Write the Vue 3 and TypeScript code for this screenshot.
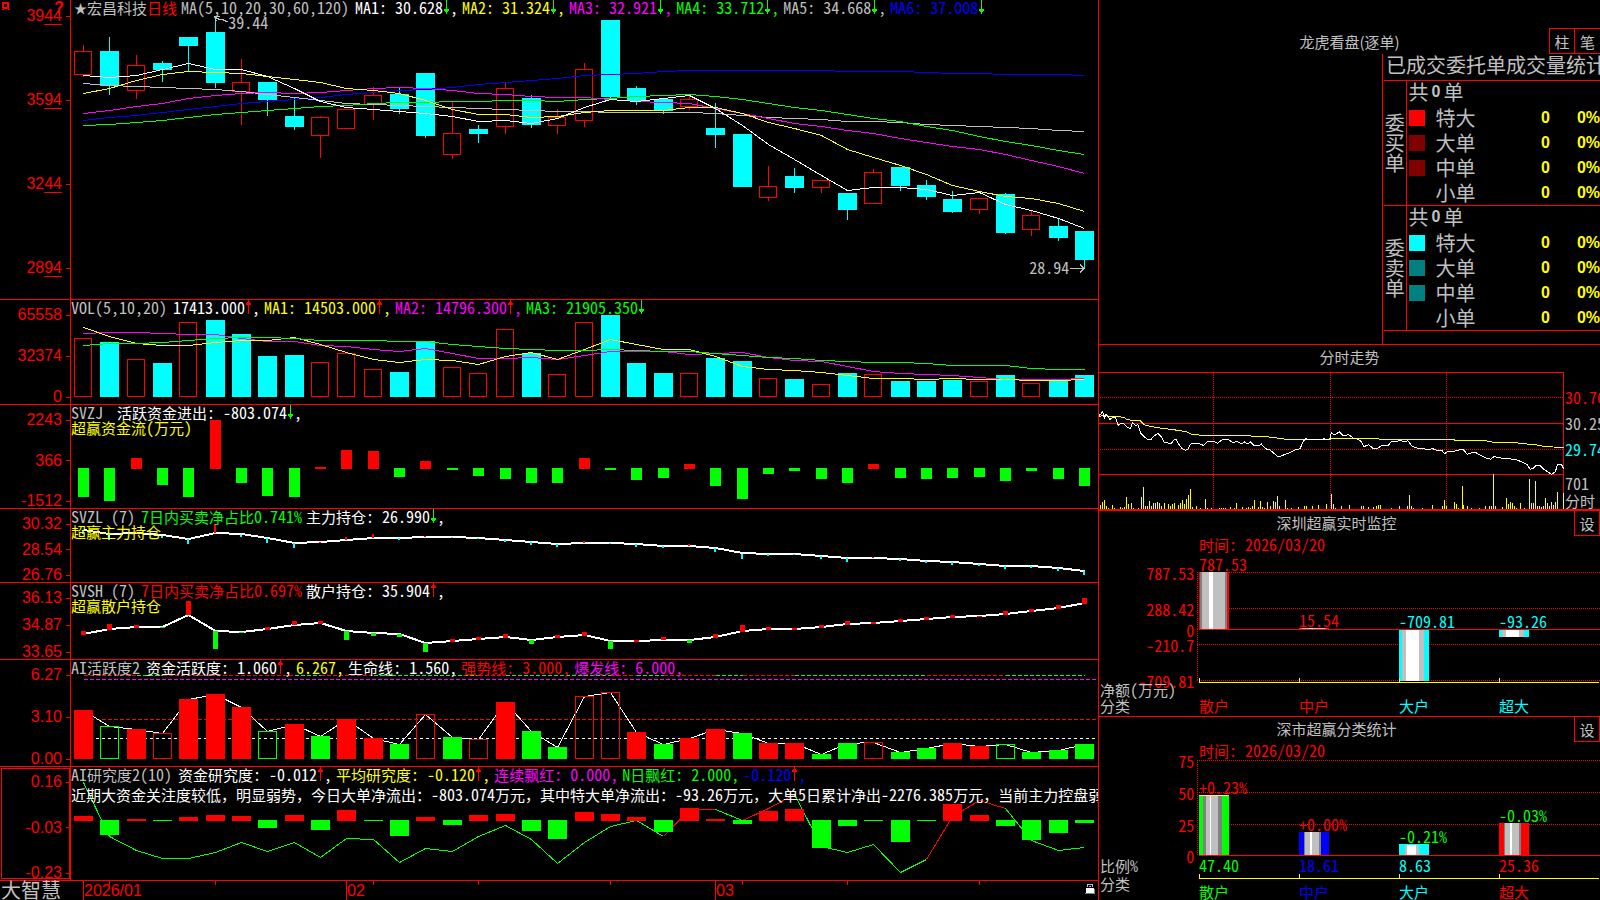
<script setup lang="ts">
import { h, type FunctionalComponent } from 'vue'

interface Rect { k: 'rect'; x: number; y: number; w: number; h: number; fill: string; stroke: string }
interface Poly { k: 'poly'; pts: string; stroke: string; w: number; dash?: string }
type Shape = Rect | Poly
interface LegendItem { t: string; c: string; a?: 'up' | 'down'; comma?: boolean }
interface Pane {
  id: string
  title: string
  items: LegendItem[]
  note?: string
  noteColor?: string
  ticks: string[]
  grow: number
  y0: number
  shapes: Shape[]
}

const RED = '#ff0000'
const CYAN = '#00ffff'
const GREEN = '#00ff00'
const YELLOW = '#ffff00'
const MAGENTA = '#ff00ff'
const BLUE = '#0000ff'
const GREY = '#c0c0c0'
const DIM = '#808080'
const WHITE = '#ffffff'
const NONE = 'none'

/* Han characters and half-width characters use two different faces. */
const Txt: FunctionalComponent<{ v: string }> = (props) =>
  h(
    'span',
    { class: 'txt' },
    (props.v.match(/[\u0000-\u00ff]+|[^\u0000-\u00ff]+/g) ?? []).map((run) =>
      h('span', { class: run.charCodeAt(0) < 256 ? 'txt-lat' : 'txt-han' }, run),
    ),
  )
Txt.props = ['v']

/* Bar i of the 39 trading days: centre of its column. */
const cx = (i: number) => 12.5 + Math.round(i * 26.345)

const solid = (x: number, top: number, bottom: number, w: number, fill: string): Rect => ({
  k: 'rect', x, y: Math.round(top), w, h: Math.max(1, Math.round(bottom) - Math.round(top)), fill, stroke: NONE,
})
const hollow = (x: number, top: number, bottom: number, w: number, stroke: string): Rect => ({
  k: 'rect', x: x + 0.5, y: Math.round(top) + 0.5, w: w - 1, h: Math.max(1, Math.round(bottom) - Math.round(top) - 1), fill: NONE, stroke,
})
const poly = (pts: number[][], stroke: string, w = 1, dash?: string): Poly => ({
  k: 'poly', pts: pts.map((p) => p.join(',')).join(' '), stroke, w, dash,
})
const series = (ys: number[], stroke: string, w = 1, scale = 1): Poly =>
  poly(ys.map((y, i) => [cx(i), Math.floor(y / scale) + (w === 1 ? 0.5 : 0)]), stroke, w)

/* high, body top, body bottom, low; r = rising day */
const candles: [string, number, number, number, number][] = [
  ['r', 45, 51, 75, 77], ['f', 37, 51, 86, 95], ['r', 55, 65, 91, 99], ['f', 61, 63, 70, 82], ['f', 37, 37, 46, 71],
  ['f', 17, 32, 83, 88], ['r', 59, 82, 92, 125], ['f', 82, 82, 100, 116], ['f', 98, 116, 127, 130], ['r', 116, 117, 136, 158],
  ['r', 109, 109, 129, 129], ['r', 87, 95, 105, 120], ['f', 88, 94, 109, 114], ['f', 73, 73, 136, 138], ['r', 102, 133, 155, 159],
  ['f', 125, 129, 134, 143], ['r', 83, 88, 127, 134], ['f', 95, 98, 125, 128], ['r', 109, 117, 126, 134], ['r', 63, 69, 121, 127],
  ['f', 20, 20, 97, 99], ['f', 86, 88, 101, 105], ['f', 98, 99, 111, 114], ['r', 96, 99, 107, 110], ['f', 103, 128, 135, 148],
  ['f', 134, 134, 187, 187], ['r', 166, 186, 198, 201], ['f', 168, 176, 188, 193], ['r', 180, 180, 188, 193], ['f', 193, 193, 210, 220],
  ['r', 169, 172, 204, 204], ['f', 167, 167, 186, 191], ['f', 180, 185, 197, 200], ['f', 191, 199, 212, 213], ['r', 198, 198, 210, 214],
  ['f', 193, 194, 233, 234], ['r', 210, 215, 230, 236], ['f', 218, 226, 238, 241], ['f', 231, 231, 260, 268],
]
const priceShapes: Shape[] = candles.flatMap(([t, hi, top, bot, lo], i): Shape[] => {
  const x = cx(i)
  const c = t === 'r' ? RED : CYAN
  const wicks: Shape[] = []
  if (hi < top) wicks.push(poly([[x, hi], [x, top]], c))
  if (lo > bot) wicks.push(poly([[x, bot], [x, lo]], c))
  return [...wicks, t === 'r' ? hollow(x - 9.5, top, bot, 18, c) : solid(x - 9.5, top, bot, 19, c)]
})
priceShapes.push(
  series([120, 117, 115, 112, 109, 106, 103, 101, 99, 97, 94, 92, 90, 89, 87, 84, 82, 80, 78, 75, 74, 73, 71, 70, 70, 70, 70, 70, 70, 71, 71, 71, 72, 73, 73, 74, 74, 74, 75], BLUE),
  series([83, 85, 86, 87, 88, 89, 91, 94, 97, 100, 103, 104, 105, 106, 107, 108, 109, 110, 111, 111, 112, 112, 112, 112, 113, 115, 117, 118, 119, 121, 121, 122, 124, 125, 126, 127, 128, 130, 131], GREY),
  series([125, 124, 122, 120, 117, 114, 112, 110, 108, 106, 105, 103, 102, 102, 101, 101, 100, 100, 101, 99, 98, 96, 95, 94, 96, 99, 103, 107, 110, 114, 118, 121, 126, 130, 136, 141, 145, 150, 154], GREEN),
  series([113, 110, 106, 103, 98, 95, 93, 92, 93, 92, 90, 88, 87, 88, 90, 93, 94, 96, 97, 97, 99, 101, 102, 103, 108, 113, 118, 123, 126, 130, 133, 138, 142, 146, 149, 154, 160, 166, 173], MAGENTA),
  series([93, 88, 80, 74, 71, 72, 73, 76, 79, 82, 88, 90, 93, 100, 109, 114, 114, 117, 116, 112, 110, 110, 110, 107, 107, 113, 122, 128, 135, 149, 157, 165, 174, 185, 191, 196, 198, 203, 211], YELLOW),
  series([75, 77, 75, 69, 63, 69, 69, 76, 88, 101, 107, 109, 111, 113, 116, 121, 120, 123, 118, 107, 99, 101, 98, 95, 108, 125, 144, 159, 175, 190, 187, 187, 189, 195, 192, 204, 210, 218, 228], WHITE),
)

/* The lower panes hold their levels in thirds of a unit. */
const volTops = [145, 156, 208, 219, 97, 90, 132, 198, 195, 217, 190, 238, 246, 153, 232, 250, 118, 190, 253, 97, 75, 219, 249, 250, 204, 213, 265, 267, 283, 249, 253, 273, 273, 270, 274, 255, 280, 270, 255]
const volKinds = 'rfrfrffffrrrffrrrfrrfffrffrfrfrfffrfrff'
const volShapes: Shape[] = volTops.map((v, i) =>
  volKinds[i] === 'r' ? hollow(cx(i) - 9.5, v / 3, 107, 18, RED) : solid(cx(i) - 9.5, v / 3, 107, 19, CYAN),
)
volShapes.push(
  series([130, 127, 127, 130, 133, 134, 145, 154, 155, 165, 170, 179, 184, 176, 190, 205, 206, 202, 208, 196, 185, 184, 184, 192, 190, 186, 201, 210, 215, 229, 245, 250, 253, 256, 262, 268, 268, 268, 265], MAGENTA, 1, 3),
  series([112, 138, 160, 166, 166, 156, 150, 150, 142, 164, 187, 208, 217, 208, 212, 223, 200, 187, 207, 178, 148, 164, 178, 178, 200, 228, 238, 242, 247, 256, 265, 265, 268, 265, 268, 268, 271, 271, 268], YELLOW, 1, 3),
  series([167, 160, 160, 157, 151, 145, 142, 142, 145, 150, 151, 151, 154, 155, 163, 169, 175, 178, 181, 181, 178, 181, 184, 184, 190, 196, 202, 205, 211, 214, 217, 217, 220, 226, 226, 227, 235, 238, 238], GREEN, 1, 3),
)

const flow = [621, 633, 504, 585, 621, 390, 579, 618, 621, 531, 480, 483, 561, 513, 540, 558, 567, 579, 579, 504, 540, 570, 564, 522, 588, 627, 552, 543, 567, 579, 522, 564, 567, 564, 561, 573, 543, 567, 588]
const flowShapes: Shape[] = flow.map((v, i) =>
  v < 534 ? solid(cx(i) - 5.5, v / 3, 179, 11, RED) : solid(cx(i) - 5.5, 178, v / 3, 11, GREEN),
)

const mainLine = [720, 732, 730, 737, 747, 729, 734, 745, 759, 758, 751, 744, 744, 742, 741, 745, 751, 757, 762, 759, 759, 762, 768, 768, 774, 791, 792, 793, 798, 804, 805, 807, 814, 816, 823, 828, 829, 834, 843]
const mainTicks = [4, 6, -2, 2, 5, -9, 2, 5, 5, -1, -3, -4, 2, -1, 1, 1, 2, 3, 3, -2, 1, 3, 2, -2, 4, 5, 2, 1, 3, 4, -1, 2, 2, 3, 2, 3, 2, 3, 4]
const mainShapes: Shape[] = [
  series(mainLine, WHITE, 2, 3),
  ...mainTicks.map((d, i) => {
    const y = Math.round(mainLine[i] / 3)
    return d < 0 ? solid(cx(i) - 1.5, y + d, y, 2, RED) : solid(cx(i) - 1.5, y, y + d, 2, CYAN)
  }),
]

const retailLine = [162, 148, 142, 141, 105, 154, 157, 149, 136, 130, 154, 161, 163, 189, 184, 178, 173, 181, 173, 167, 183, 183, 180, 180, 172, 154, 148, 147, 142, 132, 130, 124, 118, 112, 109, 102, 94, 86, 70]
const retailBars: [number, number, number][] = [
  [1, 153, 165], [1, 132, 150], [1, 135, 143], [0, 141, 144], [1, 63, 105], [0, 153, 207], [0, 156, 159], [1, 141, 149], [1, 123, 136], [1, 123, 132],
  [0, 153, 180], [0, 160, 168], [0, 162, 171], [0, 189, 216], [1, 177, 186], [1, 171, 179], [1, 162, 174], [0, 180, 192], [1, 165, 173], [1, 156, 168],
  [0, 183, 207], [1, 180, 186], [1, 171, 180], [0, 180, 189], [1, 162, 174], [1, 135, 156], [1, 141, 150], [1, 144, 150], [1, 135, 144], [1, 123, 135],
  [1, 126, 131], [1, 117, 126], [1, 111, 120], [1, 105, 114], [1, 108, 111], [1, 93, 105], [1, 87, 96], [1, 75, 87], [1, 54, 72],
]
const retailShapes: Shape[] = [
  series(retailLine, WHITE, 2, 3),
  ...retailBars.map(([up, a, b], i) => solid(cx(i) - 2.5, a / 3, b / 3, 5, up ? RED : GREEN)),
]

const actTops = [390, 439, 447, 460, 357, 342, 381, 454, 432, 468, 417, 474, 492, 403, 471, 478, 366, 453, 501, 349, 337, 456, 492, 474, 447, 459, 489, 489, 522, 489, 487, 516, 504, 489, 498, 493, 516, 510, 492]
/* R/G filled, r/g outlined */
const actKinds = 'RgRrRRRgRGRRGrGrRGGrrRGRRGRRGGrGGRRgGGG'
const capRuns: [number, number, string][] = [
  [0, 2, RED], [2, 3, GREEN], [3, 8, RED], [8, 9, GREEN], [9, 11, RED], [11, 15, GREEN], [15, 16, RED], [16, 20, GREEN], [20, 21, RED],
  [21, 22, GREEN], [22, 24, RED], [24, 25, GREEN], [25, 27, RED], [27, 32, GREEN], [32, 35, RED], [35, 38, GREEN],
]
const actShapes: Shape[] = [
  ...capRuns.map(([a, b, c]) => poly([[cx(a), 95.5], [cx(b), 95.5]], c, 1, '4 2')),
  poly([[12.5, 99.5], [1027, 99.5]], MAGENTA, 1, '4 2'),
  poly([[12.5, 139.5], [1027, 139.5]], RED, 1, '4 2'),
  poly([[12.5, 158.5], [1027, 158.5]], WHITE, 1, '3 3'),
  series(actTops, WHITE, 1, 3),
  ...actTops.map((v, i) => {
    const k = actKinds[i]
    const c = k.toUpperCase() === 'R' ? RED : GREEN
    return k === k.toUpperCase() ? solid(cx(i) - 9.5, v / 3, 179, 19, c) : hollow(cx(i) - 9.5, v / 3, 179, 19, c)
  }),
]

const resBars = [708, 765, 717, 723, 711, 705, 708, 744, 705, 750, 690, 723, 768, 711, 735, 705, 702, 753, 777, 696, 702, 711, 756, 684, 717, 732, 693, 687, 804, 738, 723, 786, 723, 672, 705, 738, 780, 759, 729]
const resLine = [606, 769, 811, 834, 834, 816, 787, 814, 787, 832, 775, 778, 847, 805, 814, 768, 736, 777, 850, 786, 740, 721, 769, 688, 688, 720, 685, 644, 800, 817, 793, 878, 837, 710, 661, 685, 780, 811, 801]
const resRuns: [number, number, string][] = [
  [0, 22, GREEN], [22, 24, RED], [24, 25, GREEN], [25, 27, RED], [27, 32, GREEN], [32, 35, RED], [35, 38, GREEN],
]
const resShapes: Shape[] = [
  ...resRuns.map(([a, b, c]) =>
    poly(resLine.slice(a, b + 1).map((y, j) => [cx(a + j), Math.floor(y / 3) + 0.5]), c),
  ),
  ...resBars.map((v, i) => (v < 720 ? solid(cx(i) - 9.5, v / 3, 241, 19, RED) : solid(cx(i) - 9.5, 240, v / 3, 19, GREEN))),
]

const panes: Pane[] = [
  {
    id: 'price', title: 'MA(5,10,20,30,60,120)', grow: 300, y0: 0, shapes: priceShapes,
    ticks: ['3944', '3594', '3244', '2894'],
    items: [
      { t: 'MA1: 30.628', c: WHITE, a: 'down', comma: true }, { t: 'MA2: 31.324', c: YELLOW, a: 'down', comma: true },
      { t: 'MA3: 32.921', c: MAGENTA, a: 'down', comma: true }, { t: 'MA4: 33.712', c: GREEN, a: 'down', comma: true },
      { t: 'MA5: 34.668', c: GREY, a: 'down', comma: true }, { t: 'MA6: 37.008', c: BLUE, a: 'down' },
    ],
  },
  {
    id: 'vol', title: 'VOL(5,10,20)', grow: 105, y0: 10, shapes: volShapes, ticks: ['65558', '32374', '0'],
    items: [
      { t: '17413.000', c: WHITE, a: 'up', comma: true }, { t: 'MA1: 14503.000', c: YELLOW, a: 'up', comma: true },
      { t: 'MA2: 14796.300', c: MAGENTA, a: 'up', comma: true }, { t: 'MA3: 21905.350', c: GREEN, a: 'down' },
    ],
  },
  {
    id: 'flow', title: 'SVZJ ', grow: 104, y0: 115, shapes: flowShapes, ticks: ['2243', '366', '-1512'],
    items: [{ t: '活跃资金进出: -803.074', c: WHITE, a: 'down', comma: true }],
    note: '超赢资金流(万元)', noteColor: YELLOW,
  },
  {
    id: 'main', title: 'SVZL (7)', grow: 74, y0: 219, shapes: mainShapes, ticks: ['30.32', '28.54', '26.76'],
    items: [{ t: '7日内买卖净占比0.741%', c: GREEN }, { t: '主力持仓: 26.990', c: WHITE, a: 'down', comma: true }],
    note: '超赢主力持仓', noteColor: YELLOW,
  },
  {
    id: 'retail', title: 'SVSH (7)', grow: 77, y0: 3, shapes: retailShapes, ticks: ['36.13', '34.87', '33.65'],
    items: [{ t: '7日内买卖净占比0.697%', c: RED }, { t: '散户持仓: 35.904', c: WHITE, a: 'up', comma: true }],
    note: '超赢散户持仓', noteColor: YELLOW,
  },
  {
    id: 'activity', title: 'AI活跃度2', grow: 107, y0: 80, shapes: actShapes, ticks: ['6.27', '3.10', '0.00'],
    items: [
      { t: '资金活跃度: 1.060', c: WHITE, a: 'up', comma: true }, { t: '6.267,', c: YELLOW }, { t: '生命线: 1.560,', c: WHITE },
      { t: '强势线: 3.000,', c: RED }, { t: '爆发线: 6.000,', c: MAGENTA },
    ],
  },
  {
    id: 'research', title: 'AI研究度2(10)', grow: 114, y0: 187, shapes: resShapes, ticks: ['0.16', '-0.03', '-0.23'],
    items: [
      { t: '资金研究度: -0.012', c: WHITE, a: 'up', comma: true }, { t: '平均研究度: -0.120', c: YELLOW, a: 'up', comma: true },
      { t: '连续飘红: 0.000,', c: MAGENTA }, { t: 'N日飘红: 2.000,', c: GREEN }, { t: '-0.120', c: BLUE, a: 'up', comma: true },
    ],
    note: '近期大资金关注度较低，明显弱势，今日大单净流出：-803.074万元，其中特大单净流出：-93.26万元，大单5日累计净出-2276.385万元，当前主力控盘弱',
    noteColor: WHITE,
  },
]

const months = [{ i: 0, t: '2026/01' }, { i: 10, t: '02' }, { i: 24, t: '03' }]
const weekTicks = [1, 5, 11, 15, 20, 25, 29, 34]
const pctX = (i: number) => `${((cx(i) - 0.5) / 1027) * 100}%`

const orderSides = [
  { side: '委买单', rows: [{ n: '特大', c: RED }, { n: '大单', c: '#800000' }, { n: '中单', c: '#800000' }, { n: '小单', c: 'transparent' }] },
  { side: '委卖单', rows: [{ n: '特大', c: CYAN }, { n: '大单', c: '#008080' }, { n: '中单', c: '#008080' }, { n: '小单', c: 'transparent' }] },
]

/* Intraday chart */
const intraday = '27,226 33,222 38,214 43,235 48,222 53,228 60,238 68,232 76,232 84,256 92,250 102,252 110,260 121,266 128,248 136,256 144,254 152,280 160,288 172,297 184,297 192,288 203,280 214,290 222,306 232,308 242,312 252,300 258,298 266,312 276,326 286,331 294,328 302,312 312,310 330,312 340,316 352,306 370,303 382,310 398,298 416,300 430,308 440,304 456,312 464,306 474,312 482,306 492,316 504,318 514,312 526,326 540,330 552,340 562,349 572,348 586,343 600,338 614,330 630,326 640,304 648,296 662,300 676,298 690,300 704,296 712,300 720,296 724,278 732,284 740,281 748,275 760,287 776,284 790,294 800,297 812,303 822,320 836,314 850,326 864,324 876,316 894,317 906,303 920,304 930,301 942,305 954,302 966,318 980,324 1000,325 1012,330 1028,326 1044,332 1056,332 1064,341 1072,335 1088,335 1104,331 1118,327 1132,343 1146,338 1158,338 1172,346 1186,353 1202,358 1212,350 1226,353 1250,356 1276,358 1296,366 1312,374 1320,388 1328,386 1336,378 1350,377 1362,388 1374,396 1384,403 1396,396 1402,374 1414,373 1421,386'
const average = '27,230 40,226 60,229 88,230 104,234 112,239 126,241 150,242 164,255 186,260 210,264 250,269 288,275 304,283 340,286 478,286 486,289 528,290 560,294 590,298 720,298 730,295 860,295 870,298 1088,298 1096,301 1184,302 1212,307 1276,308 1300,311 1340,315 1362,319 1390,321 1421,323'
const turnover: [number, number][] = [
  [31, 495], [37, 486], [43, 480], [49, 498], [55, 504], [67, 495], [73, 504], [91, 501], [97, 504], [103, 500], [109, 471], [115, 492], [124, 489], [130, 504], [145, 504],
  [154, 471], [160, 441], [166, 498], [172, 498], [178, 483], [184, 498], [190, 489], [196, 489], [202, 486], [208, 489], [214, 498], [222, 489], [235, 492], [241, 498],
  [247, 492], [253, 489], [265, 495], [271, 489], [277, 480], [283, 492], [289, 477], [295, 465], [301, 447], [307, 501], [319, 498], [331, 504], [346, 477], [352, 504],
  [364, 504], [388, 504], [394, 504], [400, 504], [406, 504], [421, 501], [433, 504], [439, 489], [457, 501], [469, 504], [475, 501], [481, 504], [487, 498], [493, 480],
  [505, 501], [511, 483], [517, 500], [523, 504], [532, 486], [541, 498], [550, 483], [556, 486], [562, 468], [568, 498], [586, 480], [592, 504], [604, 504], [625, 501],
  [643, 498], [649, 498], [667, 498], [685, 495], [709, 492], [724, 462], [730, 492], [736, 504], [754, 498], [778, 495], [814, 498], [820, 498], [835, 501], [850, 501],
  [859, 498], [865, 495], [871, 495], [904, 504], [928, 498], [952, 498], [958, 465], [964, 498], [970, 504], [997, 504], [1027, 495], [1057, 498], [1063, 480],
  [1069, 498], [1093, 486], [1099, 492], [1105, 504], [1117, 438], [1120, 495], [1132, 498], [1144, 504], [1168, 504], [1186, 498], [1198, 498], [1204, 498],
  [1210, 402], [1216, 498], [1237, 501], [1249, 474], [1255, 492], [1261, 486], [1267, 489], [1273, 498], [1279, 504], [1291, 489], [1303, 504], [1318, 417],
  [1324, 489], [1330, 489], [1336, 423], [1342, 498], [1348, 498], [1354, 501], [1360, 498], [1366, 474], [1372, 489], [1378, 498], [1384, 486], [1390, 495],
  [1396, 486], [1402, 456], [1420, 459],
]

/* Category column charts: stripes are [width, colour] from the left edge */
interface Col { x: number; top: number; bottom: number; stripes: [number, string][]; cap?: string }
interface Label { x: number; y: number; t: string; c: string }
interface Board {
  title: string; grow: number; h: number; dotted: number[]; zero: number; base: number
  cols: Col[]; scale: { y: number; t: string }[]; labels: Label[]
}
const shade: [number, string][] = [[1, RED], [2, DIM], [7, GREY], [4, WHITE], [12, GREY], [2, DIM], [2, RED]]
const cyanShade: [number, string][] = [[3, CYAN], [4, GREY], [13, WHITE], [5, GREY], [5, CYAN]]
const tube = (c: string): [number, string][] => [[5, c], [1, DIM], [5, GREY], [2, WHITE], [7, GREY], [2, DIM], [8, c]]

const boards: Board[] = [
  {
    title: '深圳超赢实时监控', grow: 206, h: 205, dotted: [61, 97, 133, 169], zero: 118, base: 171,
    cols: [
      { x: 100, top: 61, bottom: 118, stripes: shade }, { x: 200, top: 117, bottom: 118, stripes: shade },
      { x: 300, top: 119, bottom: 170, stripes: cyanShade }, { x: 400, top: 119, bottom: 126, stripes: cyanShade },
    ],
    scale: [{ y: 62, t: '787.53' }, { y: 98, t: '288.42' }, { y: 119, t: '0' }, { y: 134, t: '-210.7' }, { y: 170, t: '-709.81' }],
    labels: [
      { x: 100, y: 33, t: '时间: 2026/03/20', c: RED },
      { x: 100, y: 53, t: '787.53', c: RED }, { x: 200, y: 109, t: '15.54', c: RED },
      { x: 300, y: 110, t: '-709.81', c: CYAN }, { x: 400, y: 110, t: '-93.26', c: CYAN },
      { x: 100, y: 194, t: '散户', c: RED }, { x: 200, y: 194, t: '中户', c: RED },
      { x: 300, y: 194, t: '大户', c: CYAN }, { x: 400, y: 194, t: '超大', c: CYAN },
      { x: 1, y: 178, t: '净额(万元)', c: GREY }, { x: 1, y: 194, t: '分类', c: GREY },
    ],
  },
  {
    title: '深市超赢分类统计', grow: 183, h: 183, dotted: [43, 75, 107], zero: 138, base: 161,
    cols: [
      { x: 100, top: 78, bottom: 138, stripes: [[4, GREEN], [3, DIM], [4, GREY], [1, WHITE], [7, GREY], [4, DIM], [7, GREEN]], cap: YELLOW },
      { x: 200, top: 115, bottom: 138, stripes: tube(BLUE) },
      { x: 300, top: 127, bottom: 138, stripes: [[6, CYAN], [2, GREY], [9, WHITE], [3, GREY], [10, CYAN]], cap: CYAN },
      { x: 400, top: 106, bottom: 138, stripes: tube(RED) },
    ],
    scale: [{ y: 44, t: '75' }, { y: 76, t: '50' }, { y: 108, t: '25' }, { y: 139, t: '0' }],
    labels: [
      { x: 100, y: 33, t: '时间: 2026/03/20', c: RED },
      { x: 100, y: 70, t: '+0.23%', c: RED }, { x: 200, y: 107, t: '+0.00%', c: RED },
      { x: 300, y: 119, t: '-0.21%', c: GREEN }, { x: 400, y: 98, t: '-0.03%', c: GREEN },
      { x: 100, y: 148, t: '47.40', c: GREEN }, { x: 200, y: 148, t: '18.61', c: BLUE },
      { x: 300, y: 148, t: '8.63', c: CYAN }, { x: 400, y: 148, t: '25.36', c: RED },
      { x: 100, y: 174, t: '散户', c: GREEN }, { x: 200, y: 174, t: '中户', c: BLUE },
      { x: 300, y: 174, t: '大户', c: CYAN }, { x: 400, y: 174, t: '超大', c: RED },
      { x: 1, y: 148, t: '比例%', c: GREY }, { x: 1, y: 166, t: '分类', c: GREY },
    ],
  },
]
const stripeRects = (c: Col) => {
  let x = c.x
  return c.stripes.map(([w, fill]) => {
    const r = { x, w, fill }
    x += w
    return r
  })
}
const place = (l: { x: number; y: number }, height: number) => ({ left: `${(l.x / 501) * 100}%`, top: `${(l.y / height) * 100}%` })
</script>

<template>
  <main class="desk">
    <section class="left">
      <article v-for="p in panes" :key="p.id" class="pane" :class="p.id">
        <div class="axis">
          <template v-if="p.id === 'price'">
            <svg class="pin" viewBox="0 0 9 9" shape-rendering="crispEdges">
              <path d="M0 0h7v7h1v1h-2v-1h-4v1h-2v-1h1v-1h-1zM2 2v3h3v-3z" fill="#f00" fill-rule="evenodd" />
            </svg>
            <span class="ask">?</span>
          </template>
          <span v-for="t in p.ticks" :key="t" class="tick">
            <template v-if="p.id === 'price'">{{ t.slice(0, 2) }}<u>{{ t.slice(2) }}</u></template>
            <template v-else>{{ t }}</template>
          </span>
        </div>
        <div class="plot">
          <svg class="chart" :viewBox="`0 ${p.y0} 1027 ${p.grow - 1}`" preserveAspectRatio="none" shape-rendering="crispEdges">
            <template v-for="(s, i) in p.shapes" :key="i">
              <rect v-if="s.k === 'rect'" :x="s.x" :y="s.y" :width="s.w" :height="s.h" :fill="s.fill" :stroke="s.stroke" vector-effect="non-scaling-stroke" />
              <polyline v-else :points="s.pts" fill="none" :stroke="s.stroke" :stroke-width="s.w" :stroke-dasharray="s.dash" vector-effect="non-scaling-stroke" />
            </template>
            <g v-if="p.id === 'price'" fill="none" stroke="#c0c0c0">
              <path d="M143.500 17l4 2l5 1l4 2M143.500 17l5 -1M143.500 17l2 4M999 268.500h14M1009 264.500l4 4l-4 4" vector-effect="non-scaling-stroke" />
            </g>
          </svg>
          <div class="legend">
            <h1 v-if="p.id === 'price'" class="stock">
              <span class="star">★</span><Txt v="宏昌科技" /><Txt class="period" v="日线" />
            </h1>
            <Txt class="title" :v="p.title" />
            <span v-for="it in p.items" :key="it.t" class="item" :style="{ color: it.c }">
              <Txt :v="it.t" />
              <svg v-if="it.a" class="arrow" :class="it.a" viewBox="0 0 7 14" shape-rendering="crispEdges">
                <path d="M3 0h1v14h-1zM1 9h5v2h-5zM2 11h3v1h-3z" />
              </svg>
              <Txt v-if="it.comma" v="," />
            </span>
          </div>
          <p v-if="p.note" class="note" :style="{ color: p.noteColor }"><Txt :v="p.note" /></p>
          <template v-if="p.id === 'price'">
            <Txt class="mark high" v="39.44" />
            <Txt class="mark low" v="28.94" />
          </template>
        </div>
      </article>
      <footer class="time">
        <strong class="brand">大智慧</strong>
        <div class="days">
          <i v-for="i in weekTicks" :key="i" class="week" :style="{ left: pctX(i) }"></i>
          <time v-for="m in months" :key="m.i" class="month" :style="{ left: pctX(m.i) }">{{ m.t }}</time>
          <svg class="lock" viewBox="0 0 11 12" shape-rendering="crispEdges">
            <path d="M2 1h6v3h-1v-2h-4v2h-1zM4 3h2v1h-2z" fill="#c0c0c0" />
            <path d="M1 5h8v5h-8z" fill="#fff" />
            <path d="M9 6h1v5h-10v-1h9z" fill="#808080" />
          </svg>
        </div>
      </footer>
    </section>

    <aside class="right">
      <section class="panel orders">
        <header class="orders-head">
          <h2>龙虎看盘(逐单)</h2>
          <div class="modes"><button type="button">柱</button><button type="button">笔</button></div>
        </header>
        <div class="orders-body">
          <div class="stats">
            <h3>已成交委托单成交量统计</h3>
            <table>
              <colgroup><col class="c-side" /><col /><col class="c-num" /><col class="c-pct" /></colgroup>
              <tbody v-for="o in orderSides" :key="o.side">
                <tr>
                  <th rowspan="5" scope="rowgroup" class="side">{{ o.side }}</th>
                  <td colspan="3"><span class="total">共<b>0</b>单</span></td>
                </tr>
                <tr v-for="r in o.rows" :key="r.n">
                  <th scope="row"><span class="kind"><i :style="{ background: r.c }"></i>{{ r.n }}</span></th>
                  <td class="num">0</td>
                  <td class="num">0%</td>
                </tr>
              </tbody>
            </table>
          </div>
        </div>
      </section>

      <section class="panel trend">
        <h2>分时走势</h2>
        <div class="trend-body">
          <svg class="chart" viewBox="27 96 1395 411" preserveAspectRatio="none" shape-rendering="crispEdges">
            <g class="ln" stroke="#f00">
              <path d="M27 97.500H1420.500V507M27 250.500H1420M27 403.500H1420" />
              <path class="dots" d="M30 172.500H1420M30 328.500H1420M370.500 99V507M721.500 99V507M1069.500 99V507" />
            </g>
            <g class="ln" stroke="#ff0">
              <path v-for="b in turnover" :key="b[0]" :d="`M${b[0] + 0.5} 507V${b[1]}`" />
              <polyline :points="average" />
            </g>
            <polyline class="ln" :points="intraday" stroke="#fff" />
          </svg>
          <div class="quotes">
            <p class="levels">
              <Txt class="q-up" v="30.76" /><Txt v="30.25" /><Txt class="q-down" v="29.74" />
            </p>
            <p class="levels unit"><Txt v="701" /><Txt v="分时" /></p>
          </div>
        </div>
      </section>

      <section v-for="b in boards" :key="b.title" class="panel board">
        <svg class="chart" :viewBox="`0 0 501 ${b.h}`" preserveAspectRatio="none" shape-rendering="crispEdges">
          <g class="ln" stroke="#f00">
            <path class="dots" :d="`M98.500 ${b.dotted[0]}V${b.zero}` + b.dotted.map((y) => `M98 ${y}.500H501`).join('') + `M98.500 ${b.zero}V${b.dotted[b.dotted.length - 1]}`" />
          </g>
          <template v-for="c in b.cols" :key="c.x">
            <rect v-for="s in stripeRects(c)" :key="s.x" :x="s.x" :y="c.top" :width="s.w" :height="c.bottom - c.top" :fill="s.fill" />
            <rect v-if="c.cap" :x="c.x" :y="c.top" width="30" height="1" :fill="c.cap" />
          </template>
          <path class="ln" stroke="#f00" :d="`M100 ${b.zero}.500H501`" />
          <path class="ln" stroke="#ff0" :d="`M100 ${b.base}.500H500` + [100, 200, 300, 400].map((x) => `M${x}.500 ${b.base}v-4`).join('')" />
        </svg>
        <header class="board-head">
          <h2>{{ b.title }}</h2>
          <button type="button">设</button>
        </header>
        <div class="labels">
          <span v-for="s in b.scale" :key="s.t" class="scale" :style="place({ x: 0, y: s.y }, b.h)"><Txt :v="s.t" /></span>
          <span v-for="l in b.labels" :key="l.t" class="label" :style="{ ...place(l, b.h), color: l.c }"><Txt :v="l.t" /></span>
        </div>
      </section>
    </aside>
  </main>
</template>

<style>
html,
body {
  margin: 0;
  background: #000;
}

.txt {
  white-space: pre;
}

.txt-lat {
  font-family: "Noto Sans Mono CJK SC", "Liberation Mono", monospace;
  font-size: 16px;
}

.txt-han {
  font-family: "Noto Sans CJK SC", sans-serif;
  font-size: 15px;
}
</style>

<style scoped>
.desk {
  display: grid;
  grid-template-columns: minmax(0, 1099fr) minmax(0, 501fr);
  grid-template-rows: minmax(0, 1fr);
  height: 100vh;
  overflow: hidden;
  background: #000;
  color: #c0c0c0;
  font-family: "Noto Sans CJK SC", sans-serif;
  font-size: 15px;
  line-height: 15px;
}

h1,
h2,
h3,
p {
  margin: 0;
  font-size: 15px;
  font-weight: 400;
}

button {
  width: 26px;
  height: 26px;
  padding: 0;
  border: 1px solid #f00;
  background: #000;
  color: #c0c0c0;
  font: inherit;
}

.left {
  display: grid;
  grid-template-rows:
    minmax(0, 300fr) minmax(0, 105fr) minmax(0, 104fr) minmax(0, 74fr)
    minmax(0, 77fr) minmax(0, 107fr) minmax(0, 114fr) minmax(0, 19fr);
  border-right: 1px solid #f00;
}

.pane {
  display: grid;
  grid-template-columns: 71px minmax(0, 1fr);
  grid-template-rows: minmax(0, 1fr);
  border-bottom: 1px solid #f00;
}

.axis {
  position: relative;
  display: flex;
  flex-direction: column;
  justify-content: space-between;
  box-sizing: border-box;
  padding-top: 8px;
  border-right: 1px solid #f00;
  color: #f00;
  font-family: "Liberation Sans", sans-serif;
  font-size: 16px;
  line-height: 14px;
}

.price .axis {
  padding-top: 9px;
  padding-bottom: 24px;
}

.research .axis {
  outline: 1px solid #f00;
  outline-offset: -2px;
}

.tick {
  display: flex;
  align-items: center;
  justify-content: flex-end;
}

.tick::after {
  width: 4px;
  height: 1px;
  margin-left: 4px;
  background: #f00;
  content: "";
}

.tick u {
  text-underline-offset: 3px;
  text-decoration-thickness: 1px;
}

.pin {
  position: absolute;
  top: 2px;
  left: 2px;
  width: 9px;
  height: 9px;
}

.ask {
  position: absolute;
  top: 1px;
  right: 6px;
  font-weight: 700;
}

.plot {
  position: relative;
  display: grid;
  grid-template-rows: minmax(0, 1fr);
  grid-template-columns: minmax(0, 1fr);
  overflow-x: clip;
}

.chart {
  display: block;
  width: 100%;
  height: 100%;
  min-height: 0;
}

.plot > .chart,
.legend,
.note {
  grid-area: 1 / 1;
}

.legend {
  display: flex;
  align-self: start;
  gap: 4px;
  white-space: nowrap;
}

.price .legend {
  padding-left: 3px;
}

.stock,
.item {
  display: flex;
}

.star {
  width: 13px;
  font-size: 13px;
}

.period {
  color: #f00;
}

.title {
  margin-right: 2px;
}

.arrow {
  width: 7px;
  height: 14px;
  fill: #0f0;
}

.arrow.up {
  fill: #f00;
  transform: rotate(180deg);
}

.note {
  align-self: start;
  margin-top: 15px;
  white-space: nowrap;
}

.research .note {
  margin-top: 20px;
}

.mark {
  position: absolute;
}

.high {
  top: 5%;
  left: 15.3%;
}

.low {
  top: 87%;
  right: 2.8%;
}

.time {
  display: grid;
  grid-template-columns: 71px minmax(0, 1fr);
  grid-template-rows: minmax(0, 1fr);
}

.brand {
  padding-left: 1px;
  font-size: 20px;
  font-weight: 400;
  line-height: 17px;
}

.days {
  position: relative;
  color: #f00;
  font-family: "Liberation Sans", sans-serif;
  font-size: 16px;
  line-height: 19px;
}

.month,
.week {
  position: absolute;
  top: 0;
  border-left: 1px solid #f00;
}

.month {
  height: 100%;
}

.week {
  height: 4px;
}

.lock {
  position: absolute;
  top: 2px;
  right: 2px;
  width: 11px;
  height: 12px;
}

.right {
  display: grid;
  grid-template-columns: minmax(0, 1fr);
  grid-template-rows: minmax(0, 345fr) minmax(0, 166fr) minmax(0, 206fr) minmax(0, 183fr);
}

.panel {
  border-bottom: 1px solid #f00;
  overflow-x: clip;
}

.panel:last-child {
  border-bottom: 0;
}

.orders,
.trend {
  display: flex;
  flex-direction: column;
}

.orders-head {
  display: grid;
  grid-template-columns: 1fr auto 1fr;
  align-items: center;
  padding-top: 28px;
}

.orders-head h2 {
  grid-column: 2;
}

.modes {
  display: flex;
  justify-content: flex-end;
}

.modes button + button {
  margin-left: -1px;
  border-right: 0;
}

.orders-body {
  display: flex;
  flex: 1;
  justify-content: flex-end;
  min-height: 0;
}

.stats {
  width: 216px;
  padding-left: 1px;
  border-left: 1px solid #f00;
}

.stats h3 {
  height: 26px;
  padding-left: 2px;
  font-size: 20px;
  line-height: 22px;
  white-space: nowrap;
}

table {
  width: 100%;
  border-collapse: collapse;
  border-top: 1px solid #f00;
  table-layout: fixed;
  font-size: 20px;
  line-height: 22px;
}

tbody {
  border-bottom: 1px solid #f00;
}

tr {
  height: 25px;
}

th,
td {
  padding: 0;
  font-weight: 400;
  text-align: left;
  white-space: nowrap;
}

.c-side {
  width: 22px;
}

.c-num {
  width: 60px;
}

.c-pct {
  width: 50px;
}

.side {
  border-right: 1px solid #f00;
  line-height: 20px;
  text-align: center;
  white-space: normal;
}

.total {
  display: flex;
  gap: 3px;
  height: 24px;
  padding-left: 2px;
}

.total b,
.num {
  font-family: "Liberation Sans", sans-serif;
  font-size: 16px;
  font-weight: 700;
}

.num {
  color: #ff0;
  text-align: right;
}

.kind {
  display: flex;
  align-items: center;
  gap: 11px;
  height: 24px;
  padding-left: 2px;
}

.kind i {
  width: 16px;
  height: 16px;
}

.trend {
  border-bottom-width: 2px;
}

.trend h2 {
  height: 27px;
  line-height: 23px;
  text-align: center;
}

.trend-body {
  display: grid;
  flex: 1;
  grid-template-columns: minmax(0, 465fr) minmax(0, 36fr);
  grid-template-rows: minmax(0, 1fr);
  min-height: 0;
}

.quotes {
  padding: 17px 0 0 1px;
  line-height: 17px;
}

.levels {
  display: flex;
  flex-direction: column;
  gap: 9px;
}

.unit {
  gap: 0;
  margin-top: 17px;
}

.q-up {
  color: #f00;
}

.q-down {
  color: #0ff;
}

.ln {
  fill: none;
}

.ln,
.ln > * {
  vector-effect: non-scaling-stroke;
}

.dots {
  stroke-dasharray: 1 1;
}

.board {
  position: relative;
  display: grid;
  grid-template-columns: minmax(0, 1fr);
  grid-template-rows: minmax(0, 1fr);
}

.board > * {
  grid-area: 1 / 1;
}

.board-head {
  display: flex;
  align-self: start;
}

.board-head h2 {
  flex: 1;
  line-height: 23px;
  text-align: center;
}

.board-head button {
  margin-top: -1px;
}

.labels {
  position: relative;
}

.label,
.scale {
  position: absolute;
  transform: translateY(-50%);
  line-height: 15px;
}

.scale {
  width: 19%;
  color: #f00;
  text-align: right;
}
</style>
